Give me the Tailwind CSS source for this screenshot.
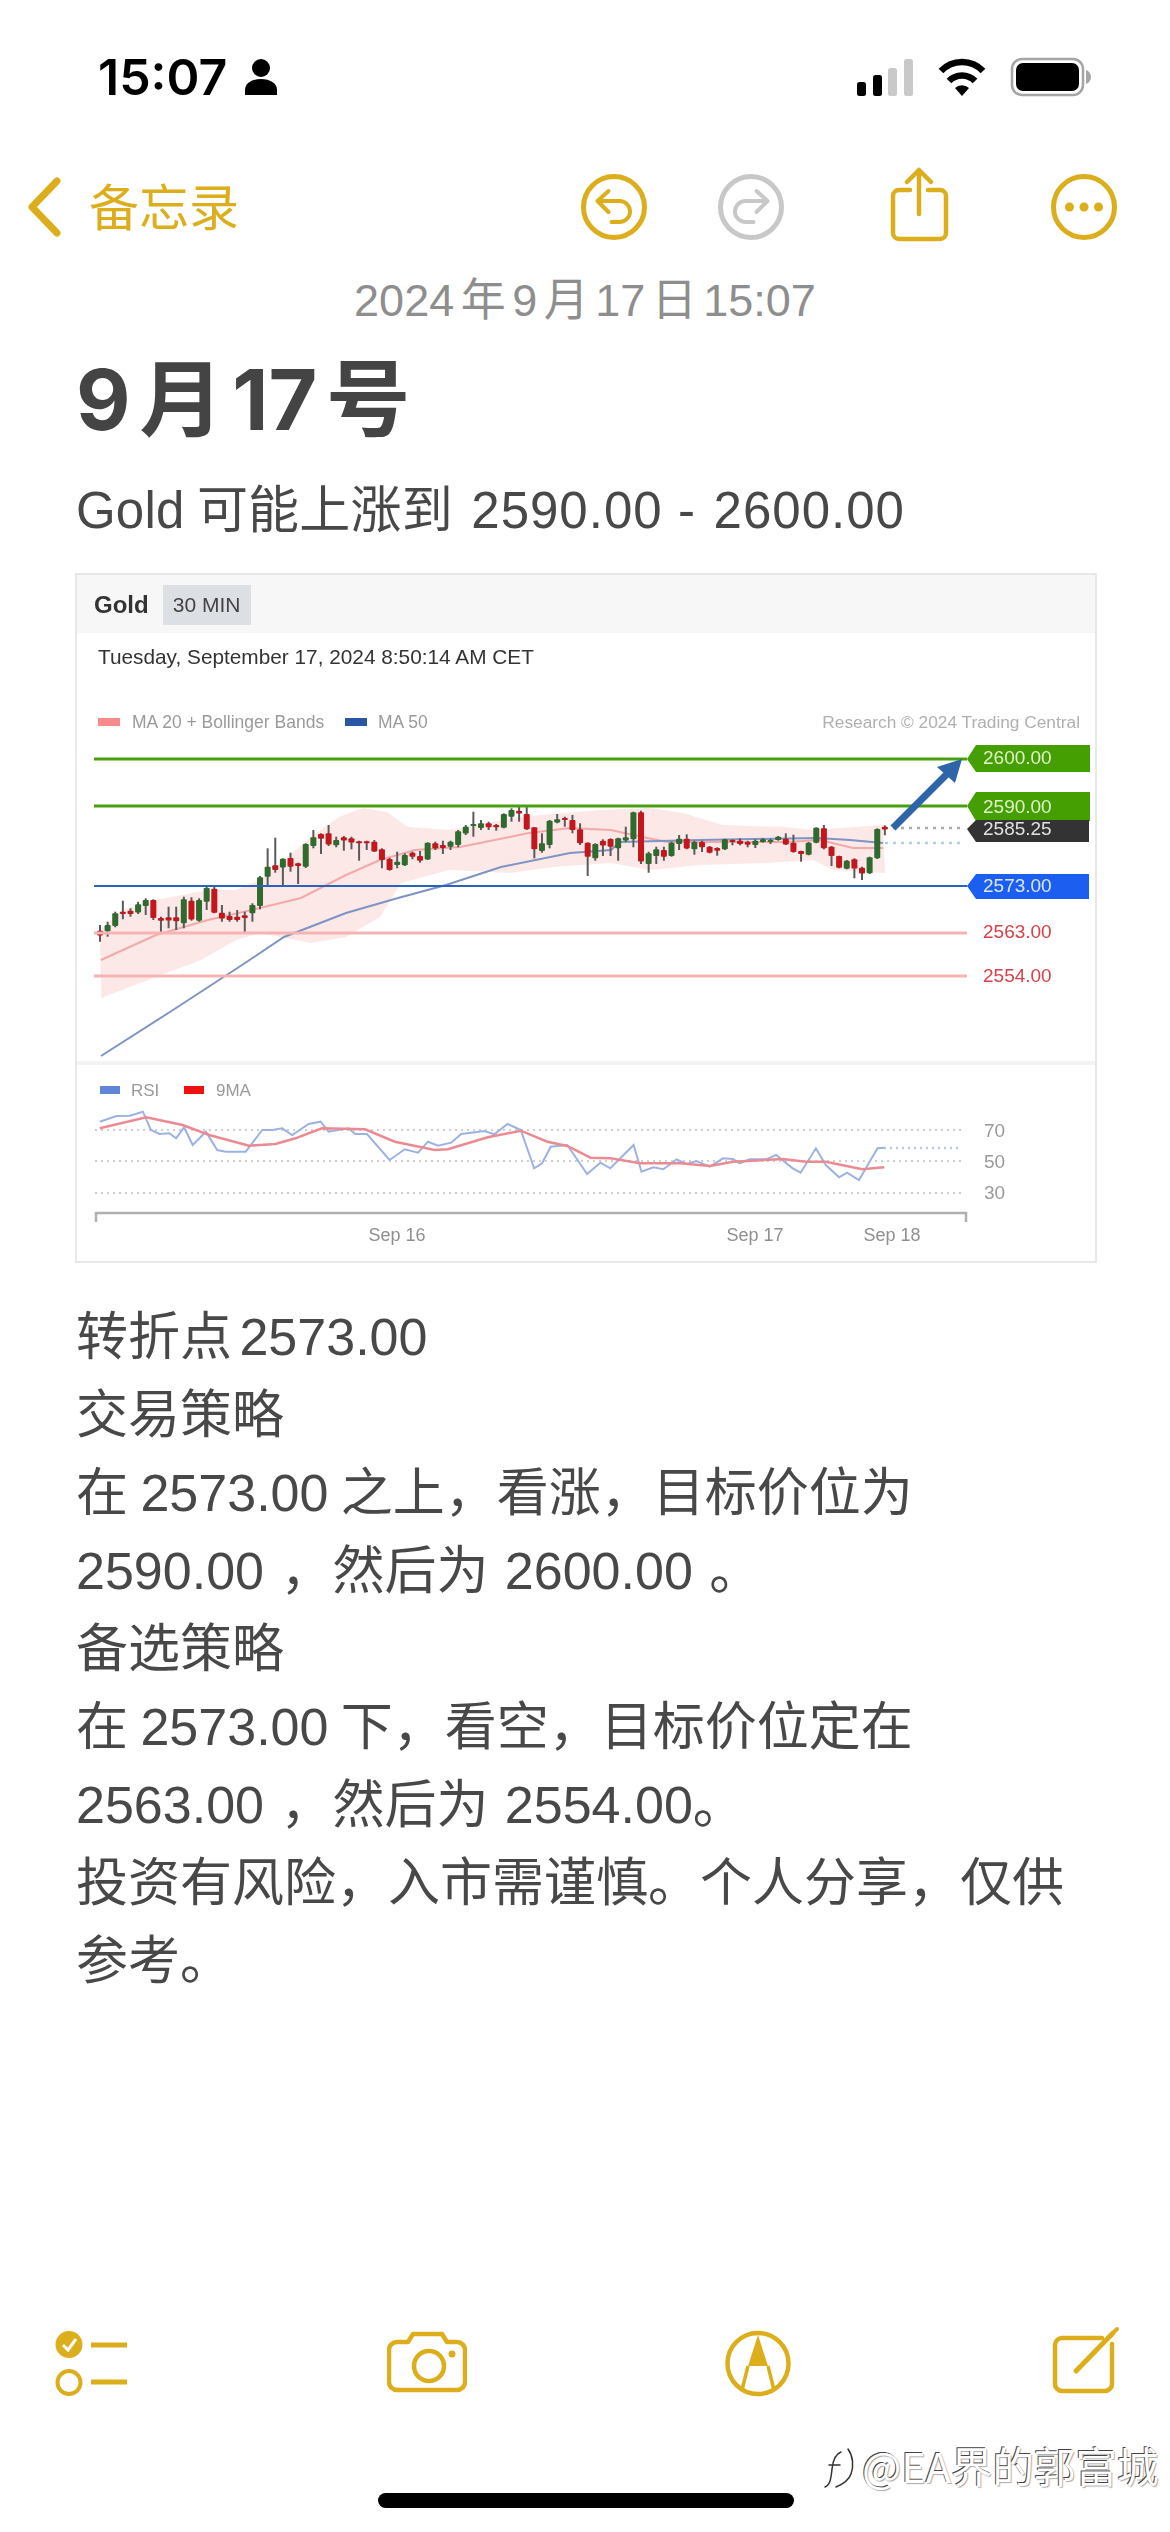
<!DOCTYPE html>
<html lang="zh-CN">
<head>
    <meta charset="UTF-8">
    <title>备忘录</title>
    <script src="https://cdn.jsdelivr.net/npm/@tailwindcss/browser@4"></script>
</head>
<body class="bg-white">
<div class="relative flex flex-col w-[1170px] h-[2532px] overflow-hidden bg-white text-[#484848] font-['Liberation_Sans','Noto_Sans_CJK_SC',sans-serif]">

    <!-- Status bar -->
    <div class="flex items-center h-[154px] pl-[98px]">
        <span class="text-[50px] leading-none font-semibold text-black font-['Inter',sans-serif]">15:07</span>
        <svg class="ml-[18px] w-[32px] h-[36px]" viewBox="0 0 32 36" fill="#000">
            <circle cx="16" cy="9" r="9"/>
            <path d="M0 36v-5c0-7 7-11 16-11s16 4 16 11v5z"/>
        </svg>
        <svg class="ml-auto mr-[79px] w-[236px] h-[40px]" viewBox="855 57 236 40">
            <rect x="857" y="82" width="9" height="14" rx="2.5" fill="#000"/>
            <rect x="873" y="75" width="9" height="21" rx="2.5" fill="#000"/>
            <rect x="888" y="68" width="9" height="28" rx="2.5" fill="#c9c9c9"/>
            <rect x="904" y="59" width="9" height="37" rx="2.5" fill="#c9c9c9"/>
            <path d="M962 96l-7-8a10 10 0 0 1 14 0z" fill="#000"/>
            <path d="M949 81a18 18 0 0 1 26 0M941 71a29 29 0 0 1 42 0" fill="none" stroke="#000" stroke-width="6.5"/>
            <rect x="1012" y="59" width="71" height="36" rx="10" fill="none" stroke="#a5a5a5" stroke-width="2.5"/>
            <rect x="1016" y="63" width="63" height="28" rx="7" fill="#000"/>
            <path d="M1086 70c3 1 5 4 5 7s-2 6-5 7z" fill="#a5a5a5"/>
        </svg>
    </div>

    <!-- Nav bar -->
    <div class="flex items-center h-[106px] text-[#dcae1c]">
        <svg class="ml-[26px] w-[36px] h-[60px]" viewBox="0 0 36 60" fill="none" stroke="currentColor" stroke-width="7" stroke-linecap="round" stroke-linejoin="round">
            <path d="M31 4L6 30l25 26"/>
        </svg>
        <span class="ml-[27px] w-[150px] pb-[6px] text-[50px] leading-none font-['Noto_Sans_CJK_SC',sans-serif]">备忘录</span>
        <svg class="ml-[338.5px] w-[72px] h-[72px]" viewBox="0 0 72 72" fill="none" stroke="currentColor" stroke-width="4" stroke-linecap="round" stroke-linejoin="round">
            <circle cx="36" cy="36" r="30.5" stroke-width="5"/>
            <path d="M19.5 30H41.5a10.5 10.5 0 0 1 0 21H33.5M30.5 20L19.5 30l11 11"/>
        </svg>
        <svg class="ml-[65.5px] w-[72px] h-[72px] text-[#c8c8c8]" viewBox="0 0 72 72" fill="none" stroke="currentColor" stroke-width="4" stroke-linecap="round" stroke-linejoin="round">
            <circle cx="36" cy="36" r="30.5" stroke-width="5"/>
            <path d="M52.5 30H30.5a10.5 10.5 0 0 0 0 21H38.5M41.5 20L52.5 30l-11 11"/>
        </svg>
        <svg class="ml-[95.5px] w-[72px] h-[80px]" viewBox="882 168 72 80" fill="none" stroke="currentColor" stroke-width="4.5" stroke-linecap="round" stroke-linejoin="round">
            <path d="M909 191h-11a6 6 0 0 0-6 6v37a6 6 0 0 0 6 6h41a6 6 0 0 0 6-6v-37a6 6 0 0 0-6-6h-12"/>
            <path d="M918 215V171M906 183l12-12 12 12"/>
        </svg>
        <svg class="ml-[93.5px] w-[72px] h-[72px]" viewBox="0 0 72 72" fill="none" stroke="currentColor" stroke-width="5">
            <circle cx="36" cy="36" r="30.5"/>
            <circle cx="21.5" cy="36" r="4.5" fill="currentColor" stroke="none"/>
            <circle cx="36" cy="36" r="4.5" fill="currentColor" stroke="none"/>
            <circle cx="50.5" cy="36" r="4.5" fill="currentColor" stroke="none"/>
        </svg>
    </div>

    <!-- Note -->
    <div class="h-[80px] flex items-center justify-center text-[45px] leading-none text-[#8e8e8e] [word-spacing:-6px]">2024 年 9 月 17 日 15:07</div>
    <h1 class="h-[120px] mb-[12px] pl-[76px] flex items-center text-[84px] leading-none font-bold text-[#444444] font-['Inter','Noto_Sans_CJK_SC',sans-serif] [word-spacing:-11px]">9 月 17 号</h1>
    <p class="h-[78px] mb-[23px] pl-[76px] text-[51px] leading-[78px] tracking-[0.2px] [word-spacing:4px]"><span class="mr-[-6px]">Gold</span> 可能上涨到 <span class="tracking-[1px]">2590.00</span> <span class="ml-[-3px]">-</span> <span class="tracking-[1px]">2600.00</span></p>

    <!-- Chart -->
    <div class="relative ml-[75px] w-[1022px] h-[690px] outline-2 -outline-offset-2 outline-[#e8e8e8] blur-[0.5px]">
        <div class="flex items-center h-[60px] pt-[4px] pl-[19px] bg-[#f7f7f7]">
            <span class="text-[24px] font-bold text-[#333333]">Gold</span>
            <span class="ml-[14px] w-[88px] h-[40px] flex items-center justify-center bg-[#dcdfe4] text-[21px] text-[#444444]">30 MIN</span>
        </div>
        <div class="pl-[23px] pt-[7px] text-[20.8px] leading-[34px] text-[#333333]">Tuesday, September 17, 2024 8:50:14 AM CET</div>
        <svg id="chart" class="absolute inset-0" width="1022" height="690" viewBox="75 573 1022 690" font-family="Liberation Sans, sans-serif">
            <rect x="77" y="1061" width="1018" height="4" fill="#f3f3f3"/>
            <!-- legend -->
            <rect x="98" y="718" width="22" height="8" fill="#f98a8a"/>
            <text x="132" y="728" font-size="17.5" fill="#9a9a9a">MA 20 + Bollinger Bands</text>
            <rect x="345" y="718" width="22" height="8" fill="#2a56a6"/>
            <text x="378" y="728" font-size="17.5" fill="#9a9a9a">MA 50</text>
            <text x="1080" y="728" font-size="17.3" fill="#b0b0b0" text-anchor="end">Research © 2024 Trading Central</text>
            <!-- bollinger band -->
            <polygon fill="#fde8e8" points="100,930 122,910 156,900 208,890 236,890 260,880 311,837 339,817 363,808 387,812 408,827 450,830 518,817 600,810 650,808 683,813 723,825 783,827 813,830 883,825 885,873 833,870 813,860 767,863 700,865 650,870 611,863 553,867 511,873 449,870 401,883 380,917 346,937 311,943 260,933 236,940 201,960 156,977 101,998"/>
            <polyline fill="none" stroke="#f4a9a9" stroke-width="2" points="101,960 156,935 208,920 260,908 301,898 346,875 380,860 415,850 460,847 529,833 570,828 611,830 633,835 667,842 723,842 787,842 820,840 853,848 883,848"/>
            <polyline fill="none" stroke="#7d94c4" stroke-width="2" points="101,1056 173,1010 242,965 284,937 346,913 398,898 446,885 501,867 570,853 611,850 620,842 700,840 817,838 850,840 883,843"/>
            <g id="candles"></g>
            <!-- levels -->
            <line x1="94" x2="967" y1="759" y2="759" stroke="#4a9f0e" stroke-width="3"/>
            <line x1="94" x2="967" y1="806" y2="806" stroke="#4a9f0e" stroke-width="3"/>
            <line x1="94" x2="967" y1="886" y2="886" stroke="#2a62c0" stroke-width="2"/>
            <line x1="94" x2="967" y1="933" y2="933" stroke="#f5b3b3" stroke-width="3"/>
            <line x1="94" x2="967" y1="976" y2="976" stroke="#f5b3b3" stroke-width="3"/>
            <line x1="893" x2="965" y1="828" y2="828" stroke="#aaaaaa" stroke-width="2.5" stroke-dasharray="3 5"/>
            <line x1="885" x2="965" y1="843" y2="843" stroke="#b6cbe6" stroke-width="2.5" stroke-dasharray="3 5"/>
            <!-- arrow -->
            <line x1="893" y1="828" x2="948" y2="773" stroke="#2d65a8" stroke-width="7"/>
            <polygon fill="#2d65a8" points="962,759 955,783 937,767"/>
            <!-- tags -->
            <polygon fill="#459e02" points="967,759 976,745 1090,745 1090,772 976,772"/>
            <polygon fill="#459e02" points="967,806 976,792 1090,792 1090,821 976,821"/>
            <polygon fill="#333333" points="967,829 976,820 1089,820 1089,842 976,842"/>
            <polygon fill="#1c5ff0" points="967,886 976,874 1089,874 1089,899 976,899"/>
            <g font-size="19">
                <text x="983" y="764" fill="#dff2c8">2600.00</text>
                <text x="983" y="813" fill="#dff2c8">2590.00</text>
                <text x="983" y="835" fill="#e0e0e0">2585.25</text>
                <text x="983" y="892" fill="#dbe6ff">2573.00</text>
                <text x="983" y="938" fill="#d9404a">2563.00</text>
                <text x="983" y="982" fill="#d9404a">2554.00</text>
            </g>
            <!-- rsi -->
            <rect x="100" y="1086" width="20" height="8" fill="#5f86d8"/>
            <text x="131" y="1096" font-size="17" fill="#9a9a9a">RSI</text>
            <rect x="184" y="1086" width="20" height="8" fill="#ee1111"/>
            <text x="216" y="1096" font-size="17" fill="#9a9a9a">9MA</text>
            <g stroke="#cfcfcf" stroke-width="2" stroke-dasharray="2 4">
                <line x1="95" x2="965" y1="1130" y2="1130"/>
                <line x1="95" x2="965" y1="1161" y2="1161"/>
                <line x1="95" x2="965" y1="1193" y2="1193"/>
                <line x1="884" x2="961" y1="1148" y2="1148" stroke="#b6cbe6" stroke-width="2.5"/>
            </g>
            <polyline id="rsi" fill="none" stroke="#9db2e4" stroke-width="2"/>
            <polyline id="ma9" fill="none" stroke="#ec8a92" stroke-width="2.5"/>
            <g font-size="19" fill="#9a9a9a">
                <text x="984" y="1137">70</text>
                <text x="984" y="1168">50</text>
                <text x="984" y="1199">30</text>
            </g>
            <path d="M96 1222v-9h870v9" fill="none" stroke="#b0b0b0" stroke-width="2.5"/>
            <g font-size="18" fill="#8f8f8f" text-anchor="middle">
                <text x="397" y="1241">Sep 16</text>
                <text x="755" y="1241">Sep 17</text>
                <text x="892" y="1241">Sep 18</text>
            </g>
        </svg>
    </div>

    <!-- Body -->
    <div class="mt-[35px] pl-[76px] text-[52px] leading-[78px] [word-spacing:-2px]">
        <p class="[word-spacing:-7px]">转折点 2573.00</p>
        <p>交易策略</p>
        <p>在 2573.00 之上，看涨，目标价位为</p>
        <p class="[word-spacing:2px]">2590.00 ，然后为 2600.00 。</p>
        <p>备选策略</p>
        <p>在 2573.00 下，看空，目标价位定在</p>
        <p class="[word-spacing:2px]">2563.00 ，然后为 2554.00。</p>
        <p>投资有风险，入市需谨慎。个人分享，仅供</p>
        <p>参考。</p>
    </div>

    <!-- Bottom toolbar -->
    <div class="mt-auto mb-[128px] pl-[51.5px] flex items-center text-[#dcae1c]">
        <svg class="w-[80px] h-[80px]" viewBox="52 2325 80 80" fill="none" stroke="currentColor" stroke-width="5">
            <circle cx="69" cy="2345.5" r="13.5" fill="currentColor" stroke="none"/>
            <path d="M63 2346l5 5 8-11" stroke="#fff" stroke-width="3"/>
            <circle cx="69" cy="2383.5" r="11.5" stroke-width="4"/>
            <path d="M91 2346h36M91 2383h36"/>
        </svg>
        <svg class="ml-[255.5px] w-[80px] h-[80px]" viewBox="387 2325 80 80" fill="none" stroke="currentColor" stroke-width="4.5" stroke-linejoin="round">
            <path d="M397 2343h11l5-8h29l5 8h10a8 8 0 0 1 8 8v32a8 8 0 0 1-8 8h-60a8 8 0 0 1-8-8v-32a8 8 0 0 1 8-8z"/>
            <circle cx="429" cy="2367" r="15"/>
            <circle cx="452" cy="2355" r="3.5" fill="currentColor" stroke="none"/>
        </svg>
        <svg class="ml-[251px] w-[80px] h-[80px]" viewBox="718 2325 80 80" fill="none" stroke="currentColor" stroke-width="4.5" stroke-linejoin="round">
            <circle cx="758" cy="2364.5" r="30.5"/>
            <path d="M758 2336l10 31h-20z" fill="currentColor" stroke="none"/>
            <path d="M748 2367l-6 24M768 2367l6 24" stroke-width="3.5"/>
        </svg>
        <svg class="ml-[247px] w-[80px] h-[80px]" viewBox="1045 2325 80 80" fill="none" stroke="currentColor" stroke-width="4.5" stroke-linecap="round" stroke-linejoin="round">
            <path d="M1102 2339h-40a7 7 0 0 0-7 7v39a7 7 0 0 0 7 7h43a7 7 0 0 0 7-7v-40"/>
            <path d="M1076 2372l37-38" stroke-width="5"/>
            <path d="M1115 2332l2-2" stroke-width="4"/>
        </svg>
    </div>

    <!-- Home indicator -->
    <div class="absolute left-[378px] top-[2493px] w-[416px] h-[15px] rounded-full bg-black"></div>

    <!-- Watermark -->
    <div class="absolute left-[823px] top-[2438px] flex items-center h-[56px] text-white">
        <svg class="w-[36px] h-[50px]" viewBox="0 0 36 50" fill="none" stroke="#333" stroke-width="1.5" stroke-linecap="round">
            <path d="M2 46c5-2 6-8 7-18 1-9 3-15 9-17M6 24h11"/>
            <path d="M25 8c5 7 6 17 3 25-2 6-8 10-15 13"/>
        </svg>
        <span class="ml-[3px] text-[41.5px] leading-none font-['Noto_Sans_CJK_SC',sans-serif] [text-shadow:-1px_-1px_0_#444,1px_1px_1px_#aaa]">@EA界的郭富城</span>
    </div>
</div>

<script>
    // hi, body top, body bottom, lo, up (values read off the chart, y = 790 + v / 3)
    const candleData = [
        [405,422,436,455,0],[395,405,424,440,1],[365,370,408,412,1],[332,365,372,388,0],[355,362,372,380,0],[335,343,368,372,1],
        [325,330,348,375,1],[328,330,384,390,0],[380,384,392,432,0],[350,382,392,415,0],[350,382,394,420,0],[320,328,400,415,1],
        [322,332,388,392,0],[325,330,392,395,1],[290,294,335,360,1],[290,296,368,370,0],[345,368,385,395,0],[365,378,390,395,0],
        [360,380,390,395,0],[365,376,384,428,0],[340,345,370,395,1],[258,262,348,358,1],[175,230,260,288,1],[143,226,240,248,0],
        [205,206,232,288,1],[188,204,230,245,0],[218,220,228,282,0],[160,162,230,234,1],[120,142,168,175,1],[130,132,146,192,0],
        [105,130,164,168,0],[140,150,166,172,1],[138,142,152,182,0],[140,145,158,178,0],[152,154,158,212,0],[152,154,160,180,0],
        [150,155,184,186,0],[175,178,210,235,0],[203,207,240,242,0],[185,215,225,235,1],[190,195,226,228,1],[185,188,200,208,0],
        [183,198,212,218,0],[157,158,208,210,1],[155,160,176,180,0],[152,165,174,192,0],[152,155,170,180,1],[120,124,165,172,1],
        [105,110,130,135,1],[65,102,108,140,1],[90,100,114,120,1],[95,100,112,120,0],[102,105,112,122,0],[70,72,113,115,1],
        [55,60,80,95,1],[50,62,70,95,0],[50,72,118,120,0],[112,112,178,205,0],[130,160,183,188,1],[90,92,165,175,1],
        [72,88,98,100,1],[80,84,90,110,0],[75,90,120,130,0],[100,118,160,165,0],[157,158,200,258,0],[160,162,205,212,1],
        [148,152,166,198,0],[145,147,170,198,0],[143,145,175,212,1],[110,142,152,156,1],[65,67,148,172,1],[62,67,215,222,0],
        [185,190,222,248,1],[170,178,198,222,1],[170,180,200,212,0],[155,158,198,200,1],[135,146,162,180,1],[133,146,175,178,0],
        [152,156,178,194,1],[152,156,172,186,0],[168,170,188,190,0],[172,174,182,197,0],[146,148,178,180,1],[148,150,156,166,0],
        [145,152,162,166,0],[152,156,164,172,0],[148,152,165,174,1],[144,148,156,158,1],[146,150,156,162,1],[138,140,150,152,1],
        [130,146,163,165,0],[134,158,186,188,0],[182,183,192,215,0],[156,158,194,196,1],[112,113,158,160,1],[105,115,175,178,0],
        [168,170,198,228,0],[197,198,233,235,0],[210,212,236,238,1],[205,208,236,265,0],[230,233,250,270,0],[200,202,250,252,1],
        [115,117,205,207,1],[106,110,118,136,0]
    ];

    // RSI and its 9MA, x = 70 + v * 0.663, y = 1050 + v / 3
    const rsiData = [45,215,70,198,90,197,110,185,122,240,135,252,150,250,160,265,172,232,185,285,205,245,222,300,235,305,265,305,290,240,305,240,320,235,335,255,360,222,378,215,390,245,420,235,430,252,448,252,482,330,505,298,525,308,540,275,555,287,575,278,590,252,625,243,640,253,660,222,680,240,700,355,712,340,725,290,750,285,780,372,800,338,815,355,850,285,862,365,880,352,895,358,915,328,930,342,945,333,965,350,985,325,1000,327,1010,340,1025,328,1050,328,1065,315,1090,355,1102,368,1125,295,1140,345,1160,382,1172,368,1190,390,1218,295,1228,293];
    const ma9Data = [45,235,115,202,170,225,210,255,270,287,310,282,340,265,380,235,445,238,490,275,550,300,570,298,630,262,680,242,720,275,750,288,785,323,815,325,860,340,920,340,965,348,1000,335,1075,327,1110,335,1140,335,1195,358,1228,352];

    function toPoints(data) {
        let points = '';
        for (let i = 0; i < data.length; i += 2) {
            points += (70 + data[i] * 0.663).toFixed(1) + ',' + (1050 + data[i + 1] / 3).toFixed(1) + ' ';
        }
        return points;
    }

    document.getElementById('rsi').setAttribute('points', toPoints(rsiData));
    document.getElementById('ma9').setAttribute('points', toPoints(ma9Data));

    let html = '';
    candleData.forEach((c, i) => {
        const x = 100 + i * 7.62;
        const y = v => (790 + v / 3).toFixed(1);
        html += `<line x1="${x}" x2="${x}" y1="${y(c[0])}" y2="${y(c[3])}" stroke="#5a5a5a" stroke-width="2"/>`;
        html += `<rect x="${x - 3}" y="${y(c[1])}" width="6" height="${Math.max((c[2] - c[1]) / 3, 2).toFixed(1)}" rx="1" fill="${c[4] ? '#2f6b2f' : '#c3171d'}"/>`;
    });
    document.getElementById('candles').innerHTML = html;
</script>
</body>
</html>
